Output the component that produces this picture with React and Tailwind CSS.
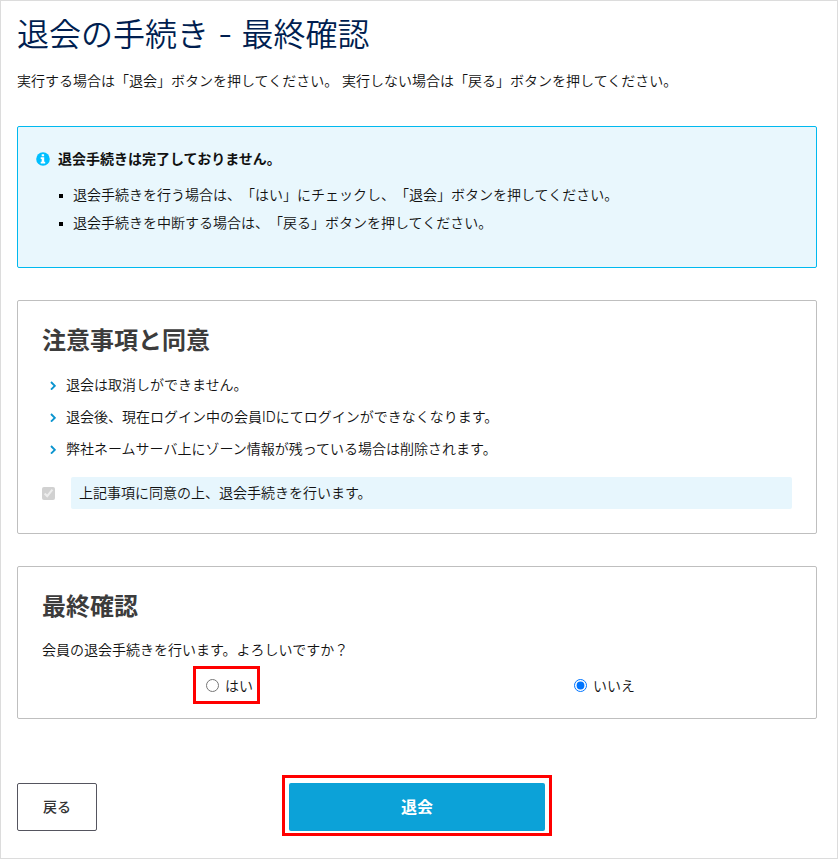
import React, { useState } from "react";

const infoItems = [
  "退会手続きを行う場合は、「はい」にチェックし、「退会」ボタンを押してください。",
  "退会手続きを中断する場合は、「戻る」ボタンを押してください。",
];

const notices = [
  "退会は取消しができません。",
  "退会後、現在ログイン中の会員IDにてログインができなくなります。",
  "弊社ネームサーバ上にゾーン情報が残っている場合は削除されます。",
];

const InfoIcon = () => (
  <svg viewBox="0 0 14 14" className="size-3.5 shrink-0">
    <circle cx="7" cy="7" r="6.8" fill="#00bfff" />
    <path d="M5.7 2.3h2.4v2H5.7z M4.7 5.3h3.5v4.5h1v1.8H4.7V9.8h1V7.1h-1z" fill="#ffffff" />
  </svg>
);

const Chevron = () => (
  <svg viewBox="0 0 6 9" className="h-[9px] w-1.5 shrink-0" fill="none" stroke="#0a94cf" strokeWidth="1.9">
    <path d="M1 1 L4.8 4.8 L1 8.6" />
  </svg>
);

const Panel = ({ title, className, children }) => (
  <section className={`mt-8 rounded-xs border border-[#bfbfbf] px-6 pt-6 ${className}`}>
    <h2 className="text-2xl leading-8 font-bold text-[#3c3c3c]">{title}</h2>
    {children}
  </section>
);

const App = () => {
  const [answer, setAnswer] = useState("no");

  const handleSubmit = (e) => {
    e.preventDefault();
  };

  return (
    <main className="min-h-screen border border-[#dcdcdc] bg-white pt-2.5 pr-5 pb-[27px] pl-4 font-['Inter','Noto_Sans_CJK_JP',sans-serif] text-sm font-[350] text-[#111111] [text-spacing-trim:space-all]">
      <h1 className="text-[32px] leading-12 font-[350] text-[#001e50]">退会の手続き - 最終確認</h1>
      <p className="mt-2 leading-7">
        実行する場合は「退会」ボタンを押してください。 実行しない場合は「戻る」ボタンを押してください。
      </p>

      {/* Information */}
      <section className="mt-[31px] rounded-xs border border-[#00b9ef] bg-[#e9f7fd] px-[18px] pt-[18px] pb-[30px]">
        <p className="flex items-center gap-2 leading-7 font-bold">
          <InfoIcon />
          退会手続きは完了しておりません。
        </p>
        <ul className="mt-2 leading-7">
          {infoItems.map((item) => (
            <li key={item} className="flex items-start gap-2.5 pl-[23px]">
              <span className="mt-[13px] size-1 shrink-0 bg-black" />
              {item}
            </li>
          ))}
        </ul>
      </section>

      <form onSubmit={handleSubmit}>
        <Panel title="注意事項と同意" className="pb-6">
          <ul className="mt-3 leading-8">
            {notices.map((notice) => (
              <li key={notice} className="flex items-center gap-2.5 pl-2">
                <Chevron />
                {notice}
              </li>
            ))}
          </ul>
          <div className="mt-3 flex items-center gap-4">
            <input id="agree" type="checkbox" className="size-[13px] shrink-0" defaultChecked disabled />
            <label htmlFor="agree" className="grow rounded-xs bg-[#e7f6fd] px-2 leading-8">
              上記事項に同意の上、退会手続きを行います。
            </label>
          </div>
        </Panel>

        <Panel title="最終確認" className="pb-5">
          <p className="mt-3 leading-[30px]">会員の退会手続きを行います。よろしいですか？</p>
          <div className="mt-2 grid grid-cols-2 justify-items-center leading-[25px]">
            <label className="relative flex items-center gap-1.5">
              <input
                type="radio"
                name="answer"
                value="yes"
                checked={answer === "yes"}
                onChange={() => setAnswer("yes")}
                className="size-[13px]"
              />
              はい
              <span className="pointer-events-none absolute -top-[7px] -right-[7px] -bottom-1.5 -left-[13px] border-3 border-[#ff0000]" />
            </label>
            <label className="flex items-center gap-1.5">
              <input
                type="radio"
                name="answer"
                value="no"
                checked={answer === "no"}
                onChange={() => setAnswer("no")}
                className="size-[13px]"
              />
              いいえ
            </label>
          </div>
        </Panel>

        {/* Actions */}
        <div className="mt-16 grid grid-cols-[1fr_auto_1fr] items-center">
          <button type="button" className="h-12 w-20 rounded-xs border border-[#55555f] font-medium text-[#333333]">
            戻る
          </button>
          <div className="relative">
            <button type="submit" className="h-12 w-64 rounded-xs bg-[#0ca2d8] text-base font-bold text-white">
              退会
            </button>
            <span className="pointer-events-none absolute -inset-x-[7px] -top-2 -bottom-[5px] border-3 border-[#ff0000]" />
          </div>
        </div>
      </form>
    </main>
  );
};

export default App;
